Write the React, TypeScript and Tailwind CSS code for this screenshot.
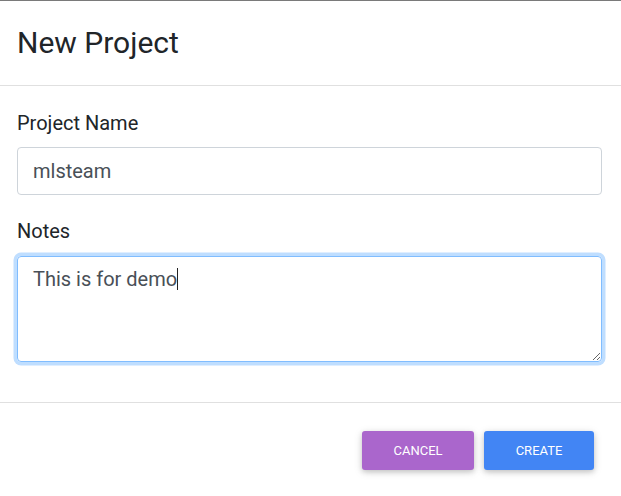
import React from "react";

export default function App() {
  return (
    <div className="w-[621px] h-[496px] bg-white overflow-hidden border-t border-[#7a7a7a] font-['Roboto',sans-serif]">
      <div className="h-[85px] flex items-center pl-[17px] border-b border-[#e0e0e0]">
        <h4 className="text-[30px] leading-[36px] text-[#212529] font-normal">New Project</h4>
      </div>
      <div className="pl-[17px] pr-[19px] pt-[22px] pb-[40px]">
        <label className="block text-[20px] leading-[30px] text-[#212529] mb-[9px]">Project Name</label>
        <input
          readOnly
          value="mlsteam"
          className="block w-full h-[48px] px-[15px] py-2 text-[20px] leading-[30px] text-[#495057] border border-[#ced4da] rounded-[4px] outline-none"
        />
        <label className="block mt-[21px] text-[20px] leading-[30px] text-[#212529] mb-[10px]">Notes</label>
        <div className="relative">
          <textarea
            readOnly
            defaultValue="This is for demo"
            className="block w-full h-[106px] px-[15px] pt-[7px] pb-2 text-[20px] leading-[30px] text-[#495057] border border-[#80bdff] rounded-[4px] outline-none shadow-[0_0_0_3.5px_rgba(0,123,255,0.25)] caret-transparent"
          />
          <div className="pointer-events-none absolute left-0 top-0 px-[15px] pt-[7px] pb-2 border border-transparent text-[20px] leading-[30px] text-transparent">
            This is for demo<span className="inline-block w-px h-[22px] bg-[#222] align-[-4px]" />
          </div>
        </div>
      </div>
      <div className="border-t border-[#e0e0e0] flex justify-end gap-[10px] pr-[27px] pt-[28px]">
        <button className="w-[112px] h-[39px] rounded-[3px] bg-[#aa66cc] text-white text-[13px] uppercase shadow-[0_2px_5px_0_rgba(0,0,0,0.16),0_2px_10px_0_rgba(0,0,0,0.12)]">
          Cancel
        </button>
        <button className="w-[110px] h-[39px] rounded-[3px] bg-[#4285f4] text-white text-[13px] uppercase shadow-[0_2px_5px_0_rgba(0,0,0,0.16),0_2px_10px_0_rgba(0,0,0,0.12)]">
          Create
        </button>
      </div>
    </div>
  );
}
